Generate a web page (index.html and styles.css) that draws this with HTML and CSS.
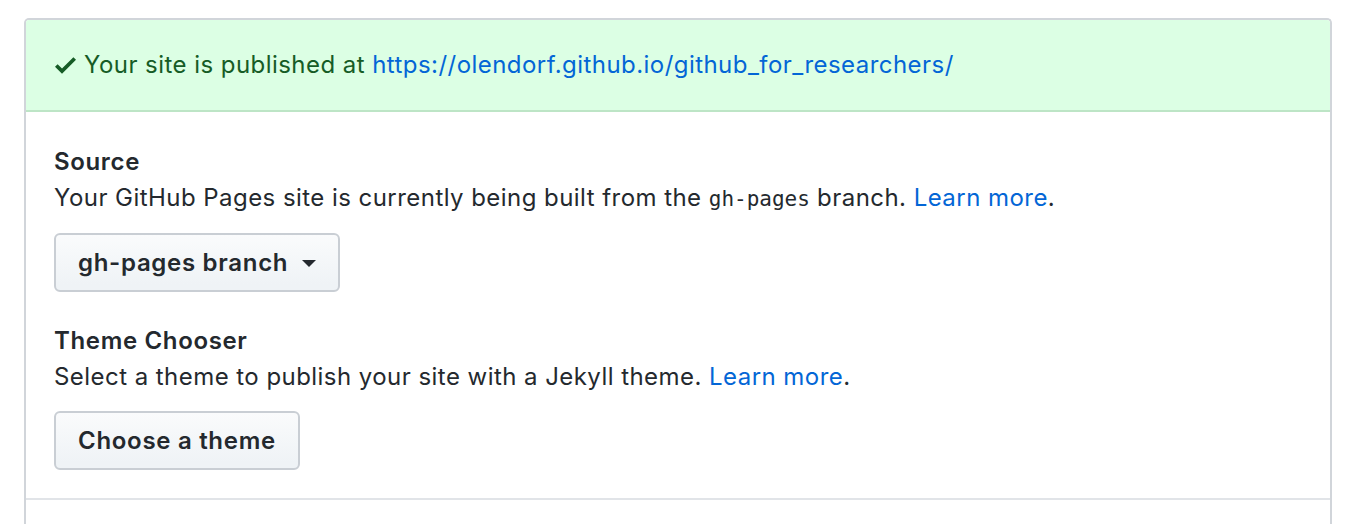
FILE: index.html
```html
<!DOCTYPE html>
<html>
<head>
<meta charset="utf-8">
<link rel="stylesheet" href="styles.css">
</head>
<body>
<div class="box">
  <div class="flash">
    <svg class="check" width="21" height="28" viewBox="0 0 12 16" aria-hidden="true"><path fill="#165c26" fill-rule="evenodd" d="M12 5l-8 8-4-4 1.5-1.5L4 10l6.5-6.5L12 5z"/></svg>
    <span>Your site is published at <a href="#">https://olendorf.github.io/github_for_researchers/</a></span>
  </div>
  <div class="body">
    <section class="group">
      <h3 class="title">Source</h3>
      <p class="desc">Your GitHub Pages site is currently being built from the <code>gh-pages</code> branch. <a href="#">Learn more</a>.</p>
      <button class="btn">gh-pages branch <span class="caret"></span></button>
    </section>
    <section class="group">
      <h3 class="title">Theme Chooser</h3>
      <p class="desc">Select a theme to publish your site with a Jekyll theme. <a href="#">Learn more</a>.</p>
      <button class="btn">Choose a theme</button>
    </section>
  </div>
  <div class="footer"></div>
</div>
</body>
</html>
```

FILE: styles.css
```css
html, body {
  margin: 0;
  padding: 0;
  background: #ffffff;
}
body {
  font-family: Inter, "Liberation Sans", Arial, sans-serif;
  font-size: 24px;
  line-height: 36px;
  letter-spacing: 0.45px;
  color: #24292e;
  padding: 18px 20px 0 24px;
}
a {
  color: #0366d6;
  text-decoration: none;
}
.box {
  border: 2px solid #d1d5da;
  border-bottom: none;
  border-radius: 5px 5px 0 0;
  height: 520px;
  box-sizing: border-box;
}
.flash {
  display: flex;
  align-items: center;
  background: #dcffe4;
  color: #165c26;
  padding: 27px 28px 27px 29px;
  border-bottom: 2px solid #bde5c6;
  border-radius: 3px 3px 0 0;
}
.check {
  display: block;
  margin-right: 8px;
  flex: none;
}
.body {
  padding: 32px 28px 28px 28px;
}
.group + .group {
  margin-top: 31px;
}
.title {
  margin: 0;
  font-size: 24px;
  font-weight: 600;
  line-height: 36px;
  letter-spacing: 0.65px;
}
.desc {
  margin: 0 0 16px 0;
}
code {
  font-family: "DejaVu Sans Mono", "Liberation Mono", monospace;
  font-size: 21px;
  letter-spacing: 0;
}
.btn {
  display: inline-flex;
  align-items: center;
  box-sizing: border-box;
  height: 59px;
  font-family: Inter, "Liberation Sans", Arial, sans-serif;
  font-size: 24px;
  font-weight: 600;
  line-height: 36px;
  letter-spacing: 0.7px;
  color: #24292e;
  padding: 0 22px;
  border: 2px solid #c9ced4;
  border-radius: 6px;
  background: linear-gradient(#fafbfc, #eff3f6 90%);
  cursor: pointer;
}
.caret {
  display: inline-block;
  width: 0;
  height: 0;
  margin-left: 14px;
  margin-top: 2px;
  border-left: 7px solid transparent;
  border-right: 7px solid transparent;
  border-top: 7px solid #24292e;
}
.footer {
  border-top: 2px solid #e1e4e8;
}
```
